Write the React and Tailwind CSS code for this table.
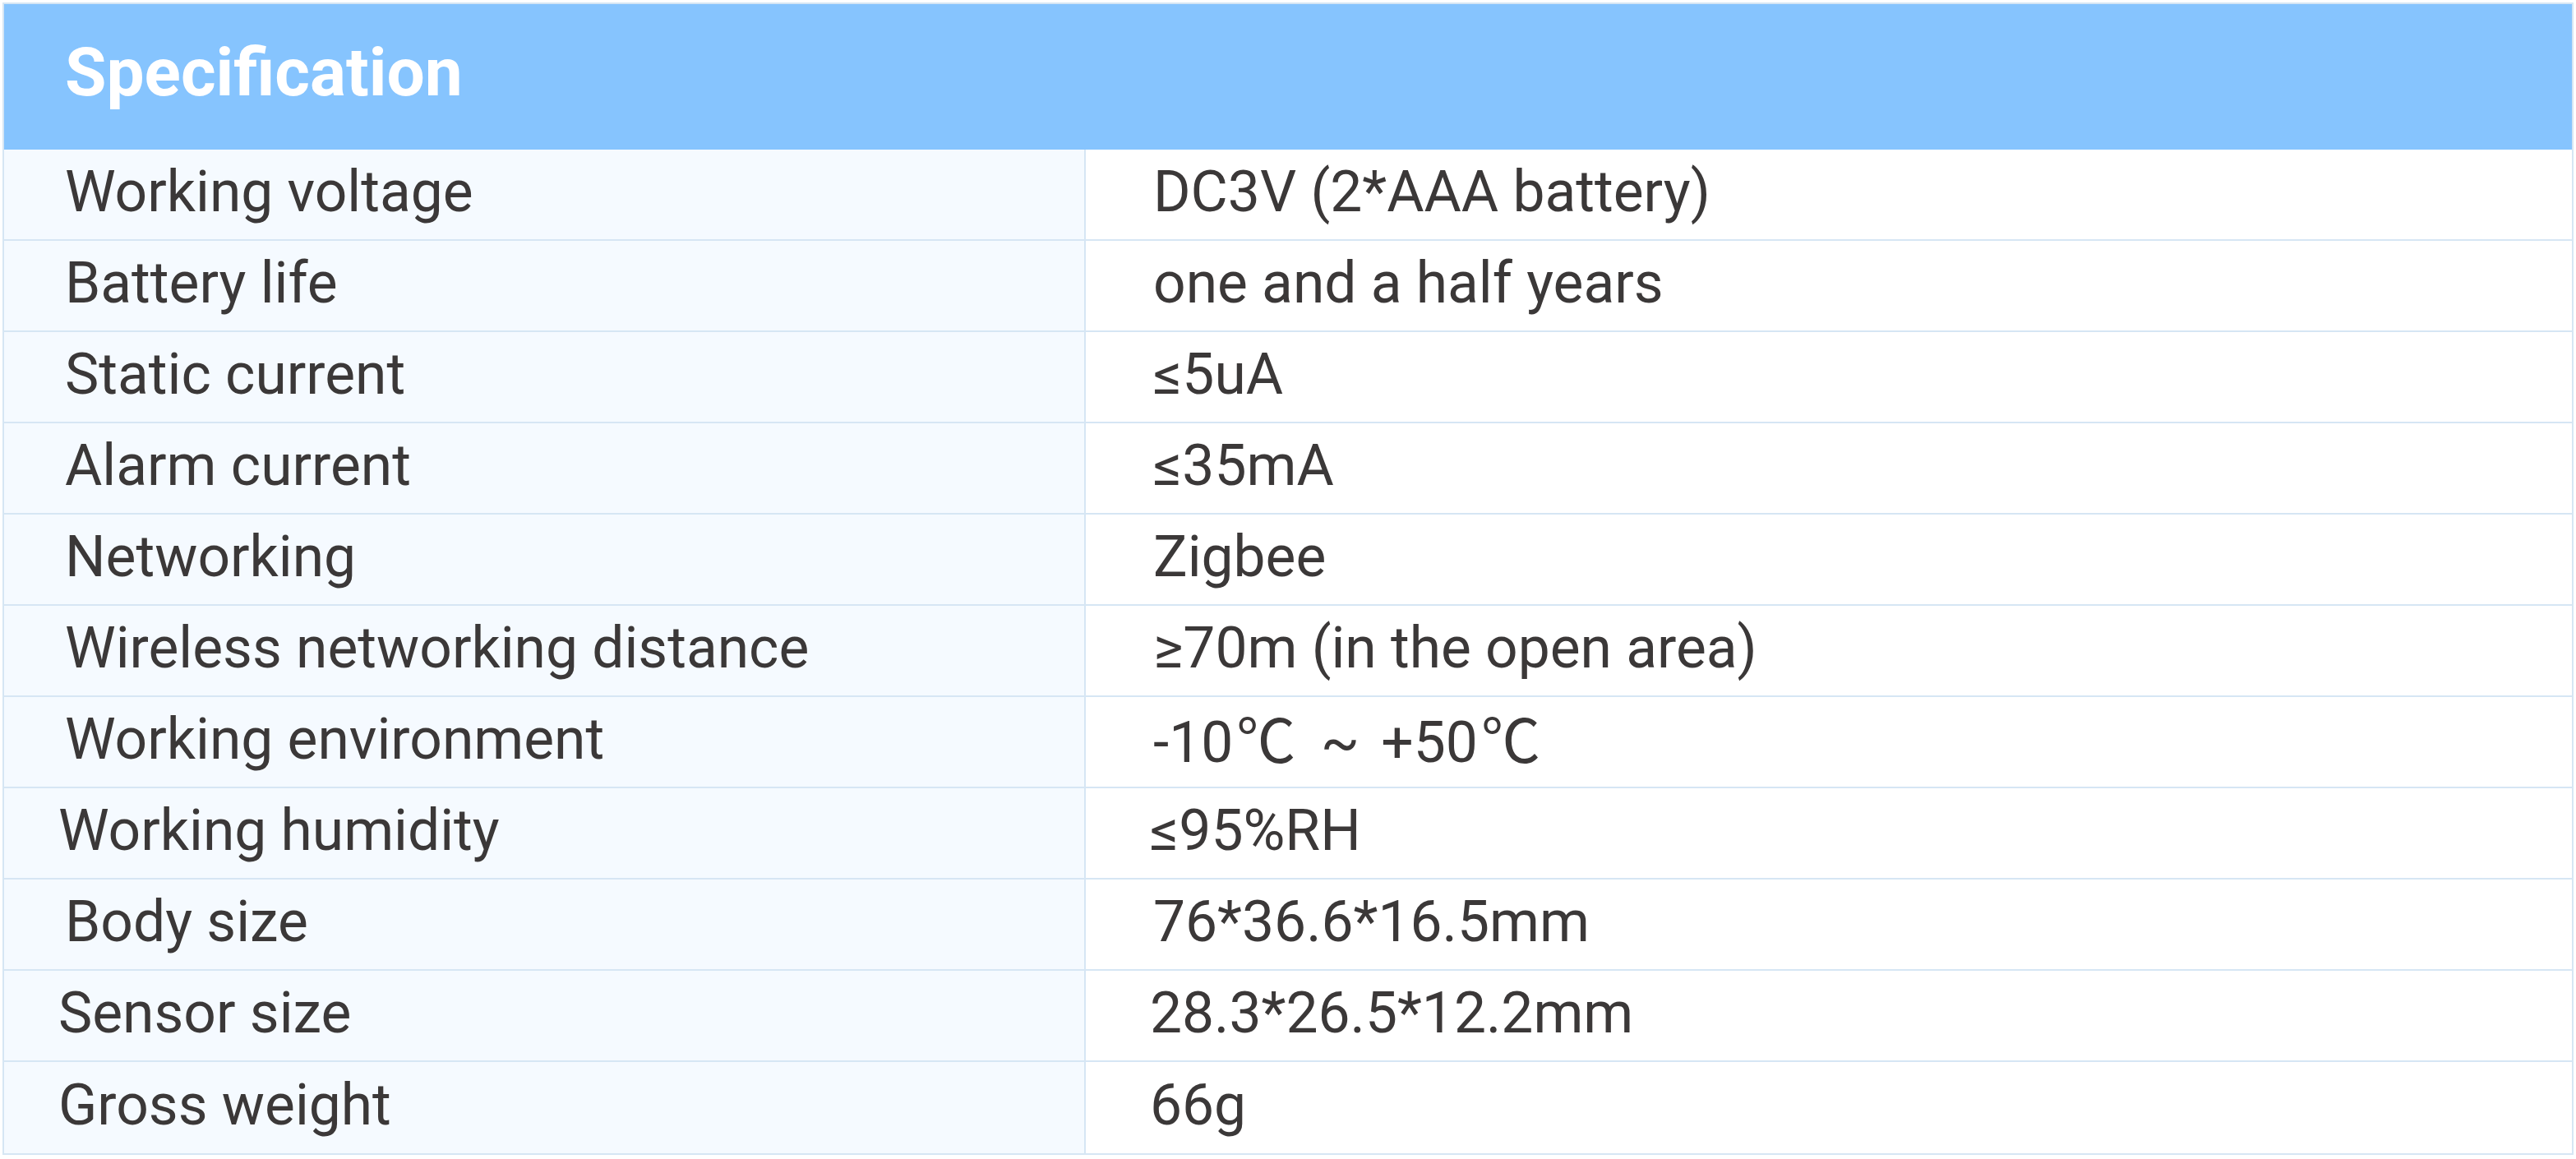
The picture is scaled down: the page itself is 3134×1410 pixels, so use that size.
import React from "react";

const C = () => (
  <span className="text-[72px] leading-none ml-[4px] mr-[4px]" style={{ fontFamily: "'Noto Sans CJK SC', sans-serif" }}>
    ℃
  </span>
);

const rows = [
  ["Working voltage", "DC3V (2*AAA battery)", 0, 0],
  ["Battery life", "one and a half years", 0, 0],
  ["Static current", "≤5uA", 0, 0],
  ["Alarm current", "≤35mA", 0, 0],
  ["Networking", "Zigbee", 0, 0],
  ["Wireless networking distance", "≥70m (in the open area)", 0, 0],
  [
    "Working environment",
    <>
      -10<C />
      <span className="inline-block w-[100px] text-center">~</span>+50<C />
    </>,
    0,
    0,
  ],
  ["Working humidity", "≤95%RH", 1, 1],
  ["Body size", "76*36.6*16.5mm", 0, 0],
  ["Sensor size", "28.3*26.5*12.2mm", 1, 1],
  ["Gross weight", "66g", 1, 1],
];

export default function App() {
  return (
    <div className="w-[3134px] h-[1410px] bg-white pt-[3px] pl-[3px]" style={{ fontFamily: "Roboto, 'Noto Sans', sans-serif" }}>
      <div className="w-[3128px] border-2 border-[#d6e6f4] flex flex-col">
        <div className="h-[177px] bg-[#86c4fe] flex items-center pl-[74px] pb-[12px]">
          <span className="text-white font-bold text-[82px] leading-none">Specification</span>
        </div>
        {rows.map(([k, v, a, b], i) => (
          <div key={i} className="h-[111px] flex border-b-2 border-[#d6e6f4] last:border-b-0 text-[#3b3838] text-[69.5px] leading-none">
            <div className={`w-[1316px] shrink-0 bg-[#f5faff] border-r-2 border-[#d6e6f4] flex items-center pb-[6px] ${a ? "pl-[66px]" : "pl-[74px]"}`}>
              {k}
            </div>
            <div className={`flex-1 bg-white flex items-center pb-[6px] ${b ? "pl-[78px]" : "pl-[82px]"}`}>
              <span>{v}</span>
            </div>
          </div>
        ))}
      </div>
    </div>
  );
}
